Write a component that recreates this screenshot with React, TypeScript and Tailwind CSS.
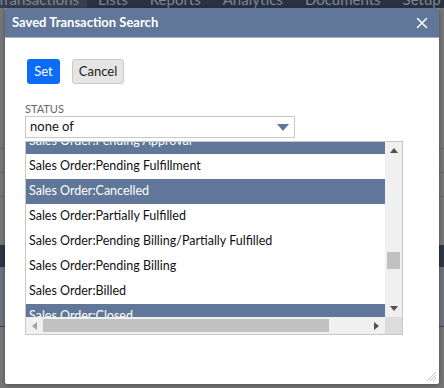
import { X } from 'lucide-react'

const rows: { label: string; sel: boolean }[] = [
  { label: 'Sales Order:Pending Approval', sel: true },
  { label: 'Sales Order:Pending Fulfillment', sel: false },
  { label: 'Sales Order:Cancelled', sel: true },
  { label: 'Sales Order:Partially Fulfilled', sel: false },
  { label: 'Sales Order:Pending Billing/Partially Fulfilled', sel: false },
  { label: 'Sales Order:Pending Billing', sel: false },
  { label: 'Sales Order:Billed', sel: false },
  { label: 'Sales Order:Closed', sel: true },
]

const navItems = ['Lists', 'Reports', 'Analytics', 'Documents', 'Setup', 'C']

function Backdrop() {
  return (
    <div className="flex flex-col h-full">
      <div className="h-[8px] bg-[#2a3242] flex overflow-hidden text-[15px] leading-[14px] text-[#7d8594]">
        <div className="bg-[#383e4c] w-[87px] -mt-[8px] shrink-0 whitespace-nowrap overflow-hidden">
          <span className="-ml-[3px] inline-block">Transactions</span>
        </div>
        <div className="flex gap-[22px] pl-[11px] -mt-[8px] whitespace-nowrap">
          {navItems.map((n) => (
            <span key={n}>{n}</span>
          ))}
        </div>
      </div>
      <div className="flex-1 bg-[#767676] flex flex-col">
        <div className="h-[92px]" />
        <div className="h-[49px] border-b border-[#6a6a6a]" />
        <div className="h-[24px] border-b border-[#6a6a6a]" />
        <div className="h-[24px] border-b border-[#6a6a6a]" />
        <div className="h-[48px]" />
        <div className="h-[22px] bg-[#2c3646]" />
        <div className="h-[60px] bg-[#6c737d] border-b border-[#3d4757]" />
        <div className="flex-1" />
      </div>
    </div>
  )
}

function ListBox() {
  return (
    <div className="mt-[3px] w-[378px] h-[194px] border border-[#c8c8c8] flex flex-col">
      <div className="flex h-[175px]">
        <div className="w-[359px] overflow-hidden">
          <div className="-mt-[13px]">
            {rows.map((r) => (
              <div
                key={r.label}
                className={
                  'h-[25px] pl-[3px] flex items-center whitespace-nowrap text-[12.5px] ' +
                  (r.sel ? 'bg-[#607799] text-white' : 'bg-white text-[#111]')
                }
              >
                {r.label}
              </div>
            ))}
          </div>
        </div>
        <div className="w-[17px] bg-[#f0f0f0] flex flex-col items-center">
          <div className="h-[17px] w-full flex items-center justify-center">
            <svg width="8" height="5" viewBox="0 0 8 5"><path d="M0 5 L4 0 L8 5 Z" fill="#505050" /></svg>
          </div>
          <div className="h-[93px]" />
          <div className="w-[13px] h-[17px] bg-[#c1c1c1]" />
          <div className="flex-1" />
          <div className="h-[17px] w-full flex items-center justify-center">
            <svg width="8" height="5" viewBox="0 0 8 5"><path d="M0 0 L4 5 L8 0 Z" fill="#505050" /></svg>
          </div>
        </div>
      </div>
      <div className="flex h-[17px]">
        <div className="w-[359px] bg-[#f0f0f0] flex items-center">
          <div className="w-[17px] h-full flex items-center justify-center">
            <svg width="5" height="8" viewBox="0 0 5 8"><path d="M5 0 L0 4 L5 8 Z" fill="#a3a3a3" /></svg>
          </div>
          <div className="w-[286px] h-[13px] bg-[#c1c1c1]" />
          <div className="flex-1" />
          <div className="w-[17px] h-full flex items-center justify-center">
            <svg width="5" height="8" viewBox="0 0 5 8"><path d="M0 0 L5 4 L0 8 Z" fill="#505050" /></svg>
          </div>
        </div>
        <div className="w-[17px] bg-[#dcdcdc]" />
      </div>
    </div>
  )
}

export default function App() {
  return (
    <div className="relative w-[444px] h-[388px] overflow-hidden font-['Lato',sans-serif]">
      <Backdrop />
      <div className="absolute left-[5px] top-[8px] w-[434px] h-[376px] bg-white rounded-[2px] shadow-[0_1px_4px_rgba(0,0,0,0.35)] flex flex-col">
        <div className="h-[30px] bg-[#607799] border-b border-[#a6b4c9] rounded-t-[2px] flex items-center pl-[7px] pr-[8px]">
          <span className="text-white font-bold text-[13px] flex-1">Saved Transaction Search</span>
          <X className="text-white w-[18px] h-[18px]" strokeWidth={2} />
        </div>
        <div className="pl-[20px] pt-[21px] flex flex-col">
          <div className="flex gap-[12px] ml-[2px]">
            <button className="h-[25px] w-[33px] bg-[#0b6cf7] text-white text-[13px] rounded-[3px]">Set</button>
            <button className="h-[25px] w-[52px] bg-[#e5e5e5] border border-[#c9c9c9] text-[#222] text-[13px] rounded-[3px]">Cancel</button>
          </div>
          <div className="mt-[18px] text-[11px] leading-[13px] text-[#666]">STATUS</div>
          <div className="mt-[1px] w-[270px] h-[22px] border border-[#c8c8c8] flex items-center pl-[4px] pr-[5px] text-[13px] text-[#111]">
            <span className="flex-1">none of</span>
            <svg width="12" height="7" viewBox="0 0 12 7"><path d="M0 0 L12 0 L6 7 Z" fill="#607799" /></svg>
          </div>
          <ListBox />
        </div>
        <div className="flex-1" />
        <div className="flex justify-end pr-[2px] pb-[2px]">
          <svg width="11" height="11" viewBox="0 0 11 11">
            <path d="M1 10 L10 1 M4 10 L10 4 M7 10 L10 7" stroke="#c4c4c4" strokeWidth="1" />
          </svg>
        </div>
      </div>
    </div>
  )
}
